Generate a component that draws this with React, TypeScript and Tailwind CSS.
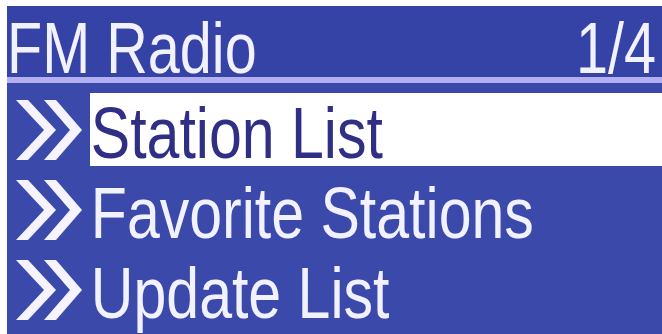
import React from "react";

const Chevrons = () => (
  <svg width="72" height="64" viewBox="0 0 72 64" className="shrink-0">
    <polygon points="4,2 16,2 44,32 16,62 4,62 32,32" fill="#f4f3ff" />
    <polygon points="32,2 44,2 70,32 44,62 32,62 58,32" fill="#f4f3ff" />
  </svg>
);

const rows = [
  { label: "Station List", active: true },
  { label: "Favorite Stations", active: false },
  { label: "Update List", active: false },
];

export default function App() {
  return (
    <div className="w-[662px] h-[334px] bg-white pt-[6px] pl-[7px] overflow-hidden" style={{ fontFamily: '"Liberation Sans", Arial, sans-serif' }}>
      <div className="w-full h-full bg-[#3b49aa] flex flex-col">
        <div className="h-[71px] bg-[#3443a5] flex justify-between items-start pt-[6px] pr-[6px] text-[#f2f1ff] text-[72px] leading-[72px]">
          <span className="inline-block origin-left scale-x-[0.8]">FM Radio</span>
          <span className="inline-block origin-right scale-x-[0.8]">1/4</span>
        </div>
        <div className="h-[6px] bg-[#b3b0f2]" />
        <div className="h-[10px]" />
        {rows.map((r) => (
          <div key={r.label} className="h-[80px] flex items-start">
            <div className="w-[83px] h-[73px] flex items-center pl-[5px]">
              <Chevrons />
            </div>
            <div className={`flex-1 h-[73px] overflow-visible whitespace-nowrap ${r.active ? "bg-white text-[#2f2f85]" : "text-[#f2f1ff]"}`}>
              <span className="inline-block pt-[4px] pl-[1px] text-[72px] leading-[72px] origin-left scale-x-[0.82]">{r.label}</span>
            </div>
          </div>
        ))}
      </div>
    </div>
  );
}
